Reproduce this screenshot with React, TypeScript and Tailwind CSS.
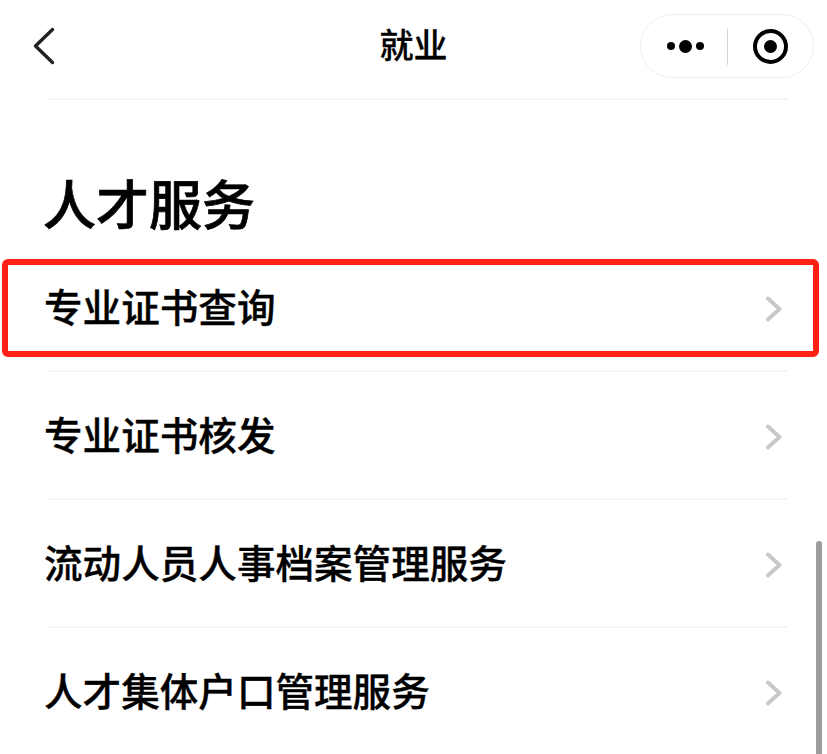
import React from 'react';

const FONT = 'font-["Liberation_Sans","Noto_Sans_CJK_SC",sans-serif]';

const items = ['专业证书查询', '专业证书核发', '流动人员人事档案管理服务', '人才集体户口管理服务'];

const RowArrow = () => (
  <svg width="18" height="26" viewBox="0 0 18 26" fill="none" className="shrink-0">
    <path d="M3 2.5 L14.5 13 L3 23.5" stroke="#c9c9c9" strokeWidth="4" strokeLinecap="round" strokeLinejoin="round" />
  </svg>
);

const Capsule = () => (
  <div className="flex items-center w-[174px] h-[64px] ml-auto rounded-full border border-[#eeeeee] bg-white">
    <div className="flex items-center justify-center gap-[4px] w-[86px] pl-[2px]">
      <span className="w-[8px] h-[8px] rounded-full bg-black" />
      <span className="w-[13px] h-[13px] rounded-full bg-black" />
      <span className="w-[8px] h-[8px] rounded-full bg-black" />
    </div>
    <div className="w-px h-[37px] bg-[#d8d8d8]" />
    <div className="flex items-center justify-center flex-1">
      <div className="flex items-center justify-center w-[35px] h-[35px] rounded-full border-[4px] border-black">
        <span className="w-[13px] h-[13px] rounded-full bg-black" />
      </div>
    </div>
  </div>
);

export default function App() {
  return (
    <div className={`relative w-[827px] h-[754px] overflow-hidden bg-white text-black ${FONT}`}>
      {/* Nav bar */}
      <div className="relative flex items-center h-[92px] pl-[32px] pr-[13px]">
        <svg width="24" height="40" viewBox="0 0 24 40" fill="none" className="shrink-0">
          <path d="M20.5 3.5 L3.5 20 L20.5 36.5" stroke="#222222" strokeWidth="3.4" strokeLinecap="round" strokeLinejoin="round" />
        </svg>
        <div className="absolute inset-x-0 top-[24px] text-center text-[34px] leading-[44px] font-medium [-webkit-text-stroke:0.3px_black]">就业</div>
        <Capsule />
      </div>

      <div className="ml-[47px] mr-[39px] mt-[6px] h-[2px] bg-[#f5f5f5]" />

      {/* Section */}
      <div className="pl-[43px] mt-[76px] text-[53px] leading-[62px] font-medium [-webkit-text-stroke:0.7px_black]">人才服务</div>

      <div className="mt-[6px] pl-[44px] pr-[40px]">
        {items.map((label, i) => (
          <div key={label} className="relative">
            <div className="flex items-center justify-between h-[126px] pt-[4px] pr-[4px]">
              <span className="text-[38.6px] leading-[50px] font-medium [-webkit-text-stroke:0.35px_black]">{label}</span>
              <RowArrow />
            </div>
            <div className="ml-[3px] h-[2px] bg-[#f5f5f5]" />
            {i === 0 && (
              <div className="absolute left-[-42px] right-[-32px] top-[15px] h-[98px] rounded-[6px] border-[6px] border-[#ff2016]" />
            )}
          </div>
        ))}
      </div>

      {/* Scrollbar */}
      <div className="absolute left-[816px] top-[541px] w-[6px] h-[213px] rounded-t-[3px] bg-[#9c9c9c]" />
    </div>
  );
}
